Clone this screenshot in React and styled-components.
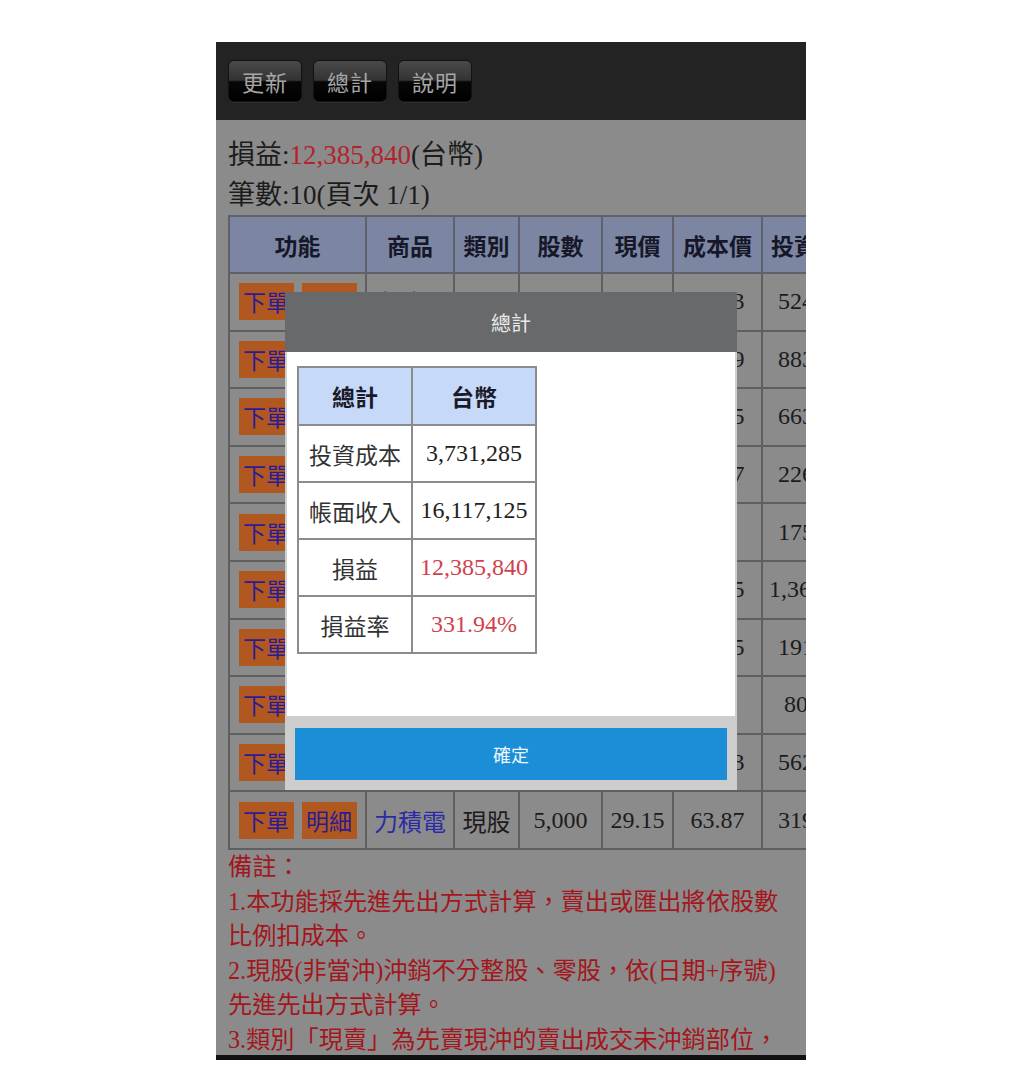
import React from 'react'
import styled, { createGlobalStyle } from 'styled-components'

const GlobalStyle = createGlobalStyle`
  html, body {
    margin: 0;
    padding: 0;
    background: #ffffff;
  }
  body {
    font-family: "Liberation Serif", "Noto Sans CJK TC", serif;
  }
`

const SERIF = `"Liberation Serif", "Noto Sans CJK TC", serif`
const SANS = `"Noto Sans CJK TC", "Noto Sans", sans-serif`

const rows = [
  { name: '力積電', kind: '現股', qty: '8,000', price: '29.15', cost: '65.53', invest: '524,240' },
  { name: '聯電', kind: '現股', qty: '10,000', price: '49.80', cost: '88.39', invest: '883,900' },
  { name: '友達', kind: '現股', qty: '22,000', price: '17.25', cost: '30.15', invest: '663,300' },
  { name: '群創', kind: '現股', qty: '10,000', price: '14.60', cost: '22.67', invest: '226,700' },
  { name: '華邦電', kind: '現股', qty: '5,000', price: '26.10', cost: '35', invest: '175,000' },
  { name: '南亞科', kind: '現股', qty: '30,000', price: '62.40', cost: '45.55', invest: '1,366,500' },
  { name: '旺宏', kind: '現股', qty: '5,000', price: '27.35', cost: '38.35', invest: '191,750' },
  { name: '彩晶', kind: '現股', qty: '5,000', price: '9.12', cost: '16', invest: '80,000' },
  { name: '世界', kind: '現股', qty: '10,000', price: '98.70', cost: '56.23', invest: '562,300' },
  { name: '力積電', kind: '現股', qty: '5,000', price: '29.15', cost: '63.87', invest: '319,350' },
]

const columns = [
  { label: '功能', width: 137 },
  { label: '商品', width: 88 },
  { label: '類別', width: 65 },
  { label: '股數', width: 83 },
  { label: '現價', width: 71 },
  { label: '成本價', width: 89 },
  { label: '投資成本', width: 110 },
]

const Phone = styled.div`
  width: 590px;
  height: 1018px;
  margin: 42px 0 0 216px;
  display: flex;
  flex-direction: column;
  position: relative;
  overflow: hidden;
  background: #8b8b8b;
`

const Toolbar = styled.div`
  height: 78px;
  flex: none;
  display: flex;
  align-items: flex-start;
  gap: 11px;
  padding: 18px 12px 0;
  box-sizing: border-box;
  background: #232323;
`

const ToolButton = styled.button`
  width: 74px;
  height: 42px;
  padding: 0;
  border: 1px solid #121212;
  border-radius: 6px;
  background: linear-gradient(to bottom, #4a4a4a 0%, #333333 48%, #070707 52%, #000000 100%);
  color: #a6a6a6;
  font-family: ${SANS};
  font-size: 22px;
  letter-spacing: 1px;
  box-shadow: 0 1px 0 rgba(255, 255, 255, 0.05);
`

const Content = styled.div`
  flex: 1;
  overflow: hidden;
  padding: 15px 12px 0;
  font-family: ${SERIF};
  color: #1c1c1c;
`

const SummaryLine = styled.div`
  font-size: 27px;
  line-height: 40px;
  white-space: nowrap;
`

const Red = styled.span`
  color: #b3232d;
`

const Grid = styled.table`
  border-collapse: collapse;
  table-layout: fixed;
  width: ${columns.reduce((s, c) => s + c.width, 0)}px;
  font-size: 24px;
`

const HeadCell = styled.th`
  height: 55px;
  padding: 0;
  background: #7c86a2;
  border: 2px solid #5f6068;
  color: #16182a;
  font-family: ${SANS};
  font-size: 23px;
  font-weight: 700;
  text-align: center;
  white-space: nowrap;
  overflow: hidden;
`

const Cell = styled.td`
  height: 55.6px;
  padding: 0;
  border: 2px solid #5f5f5f;
  text-align: center;
  white-space: nowrap;
  overflow: hidden;
  color: ${(p) => (p.$link ? '#2b2ba6' : '#1c1c1c')};
`

const ActionGroup = styled.div`
  display: flex;
  justify-content: center;
  gap: 8px;
`

const ActionTag = styled.span`
  display: block;
  width: 55px;
  height: 37px;
  line-height: 37px;
  background: #b0581f;
  color: #2a1c96;
  font-family: ${SANS};
  font-size: 23px;
  text-align: center;
`

const Notes = styled.div`
  font-size: 24.2px;
  line-height: 34.6px;
  color: #a3171c;
  white-space: nowrap;
`

const BottomBar = styled.div`
  height: 5px;
  flex: none;
  background: #111111;
`

const Dialog = styled.div`
  position: absolute;
  left: 69px;
  top: 250px;
  width: 452px;
  display: flex;
  flex-direction: column;
`

const DialogHead = styled.div`
  height: 60px;
  background: #67696a;
  color: #e9e9e9;
  font-family: ${SANS};
  font-size: 20px;
  display: flex;
  align-items: center;
  justify-content: center;
`

const DialogBody = styled.div`
  height: 364px;
  box-sizing: border-box;
  padding: 14px 10px;
  background: #ffffff;
  border-left: 2px solid #cfcfcf;
  border-right: 2px solid #cfcfcf;
`

const TotalTable = styled.table`
  border-collapse: collapse;
  table-layout: fixed;
  width: 238px;
  font-size: 24px;
`

const TotalHead = styled.th`
  height: 56px;
  padding: 0;
  background: #c7d9f8;
  border: 2px solid #8c8c8c;
  color: #1a1a2a;
  font-family: ${SANS};
  font-size: 23px;
  font-weight: 700;
  text-align: center;
`

const TotalLabel = styled.td`
  height: 55px;
  padding: 0;
  border: 2px solid #8c8c8c;
  color: #333333;
  font-family: ${SANS};
  font-size: 23px;
  text-align: center;
  white-space: nowrap;
`

const TotalValue = styled.td`
  height: 55px;
  padding: 0;
  border: 2px solid #8c8c8c;
  color: ${(p) => (p.$red ? '#d0414f' : '#222222')};
  font-family: ${SERIF};
  text-align: center;
  white-space: nowrap;
`

const DialogFoot = styled.div`
  height: 74px;
  box-sizing: border-box;
  padding: 12px 10px 10px;
  background: #cdcdcd;
`

const ConfirmButton = styled.button`
  width: 100%;
  height: 52px;
  border: none;
  background: #1b8ed7;
  color: #eef7ff;
  font-family: ${SANS};
  font-size: 18px;
`

const totals = [
  { label: '投資成本', value: '3,731,285' },
  { label: '帳面收入', value: '16,117,125' },
  { label: '損益', value: '12,385,840', red: true },
  { label: '損益率', value: '331.94%', red: true },
]

export default function App() {
  return (
    <>
      <GlobalStyle />
      <Phone>
        <Toolbar>
          <ToolButton>更新</ToolButton>
          <ToolButton>總計</ToolButton>
          <ToolButton>說明</ToolButton>
        </Toolbar>
        <Content>
          <SummaryLine>
            損益:<Red>12,385,840</Red>(台幣)
          </SummaryLine>
          <SummaryLine>筆數:10(頁次 1/1)</SummaryLine>
          <Grid>
            <colgroup>
              {columns.map((c) => (
                <col key={c.label} style={{ width: c.width }} />
              ))}
            </colgroup>
            <thead>
              <tr>
                {columns.map((c) => (
                  <HeadCell key={c.label}>{c.label}</HeadCell>
                ))}
              </tr>
            </thead>
            <tbody>
              {rows.map((r, i) => (
                <tr key={i}>
                  <Cell>
                    <ActionGroup>
                      <ActionTag>下單</ActionTag>
                      <ActionTag>明細</ActionTag>
                    </ActionGroup>
                  </Cell>
                  <Cell $link>{r.name}</Cell>
                  <Cell>{r.kind}</Cell>
                  <Cell>{r.qty}</Cell>
                  <Cell>{r.price}</Cell>
                  <Cell>{r.cost}</Cell>
                  <Cell>{r.invest}</Cell>
                </tr>
              ))}
            </tbody>
          </Grid>
          <Notes>
            備註：
            <br />
            1.本功能採先進先出方式計算，賣出或匯出將依股數
            <br />
            比例扣成本。
            <br />
            2.現股(非當沖)沖銷不分整股、零股，依(日期+序號)
            <br />
            先進先出方式計算。
            <br />
            3.類別「現賣」為先賣現沖的賣出成交未沖銷部位，
            <br />
            將依成本價計算。
          </Notes>
        </Content>
        <BottomBar />
        <Dialog>
          <DialogHead>總計</DialogHead>
          <DialogBody>
            <TotalTable>
              <colgroup>
                <col style={{ width: 114 }} />
                <col style={{ width: 124 }} />
              </colgroup>
              <thead>
                <tr>
                  <TotalHead>總計</TotalHead>
                  <TotalHead>台幣</TotalHead>
                </tr>
              </thead>
              <tbody>
                {totals.map((t) => (
                  <tr key={t.label}>
                    <TotalLabel>{t.label}</TotalLabel>
                    <TotalValue $red={t.red}>{t.value}</TotalValue>
                  </tr>
                ))}
              </tbody>
            </TotalTable>
          </DialogBody>
          <DialogFoot>
            <ConfirmButton>確定</ConfirmButton>
          </DialogFoot>
        </Dialog>
      </Phone>
    </>
  )
}
